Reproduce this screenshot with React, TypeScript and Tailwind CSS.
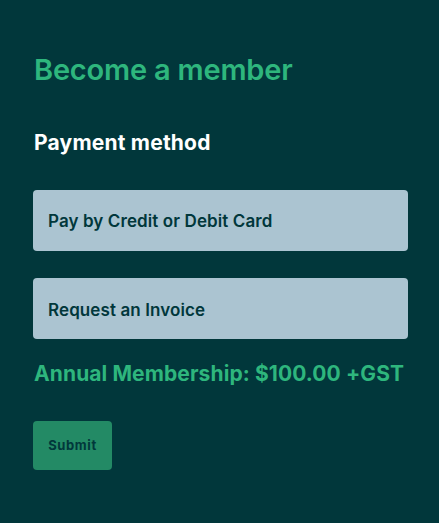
import React from "react";

export default function App() {
  return (
    <div className="min-h-[523px] w-full bg-[#01373b] pl-[33px] pr-[31px] pt-[52px] pb-[53px]" style={{ fontFamily: "Inter, 'Noto Sans', sans-serif" }}>
      <h1 className="text-[29px] leading-[36px] font-semibold tracking-[-0.2px] text-[#2eb67d] pl-[1px]">Become a member</h1>
      <h2 className="mt-[42px] text-[21px] leading-[26px] font-bold tracking-[0.2px] text-white pl-[1px]">Payment method</h2>
      <div className="mt-[34px] flex flex-col gap-[27px]">
        <button className="h-[61px] w-full rounded-[4px] bg-[#abc4d1] px-[15px] pt-[2px] text-left text-[17px] font-semibold tracking-[0.1px] text-[#01373b]">Pay by Credit or Debit Card</button>
        <button className="h-[61px] w-full rounded-[4px] bg-[#abc4d1] px-[15px] pt-[5px] text-left text-[17px] font-semibold tracking-[0.1px] text-[#01373b]">Request an Invoice</button>
      </div>
      <p className="mt-[22px] text-[21px] leading-[26px] font-bold tracking-[0.1px] text-[#2eb67d] pl-[1px]">Annual Membership: $100.00 +GST</p>
      <button className="mt-[34px] h-[49px] w-[79px] rounded-[4px] bg-[#238a65] text-[13px] font-bold tracking-[0.6px] text-[#01373b]">Submit</button>
    </div>
  );
}
